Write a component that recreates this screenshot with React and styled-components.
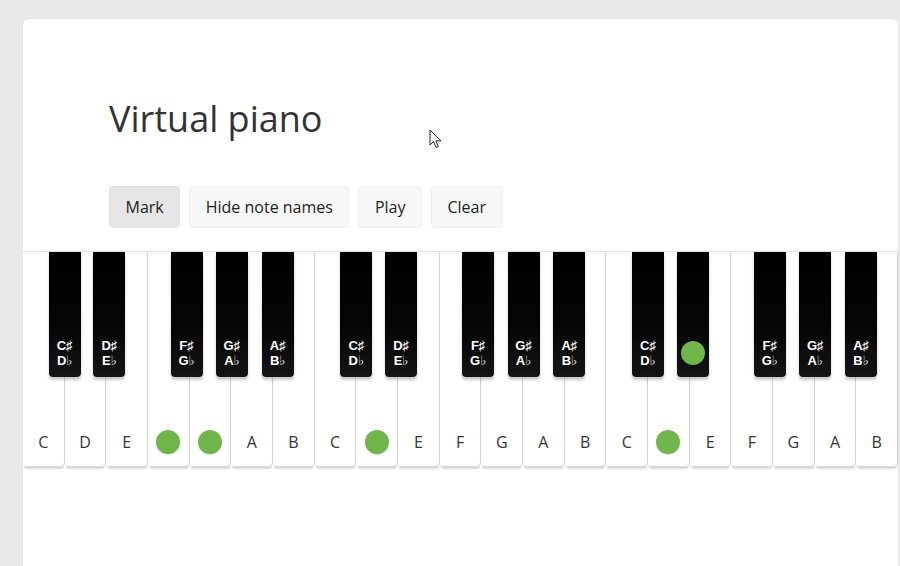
import React from 'react';
import styled, { createGlobalStyle } from 'styled-components';

const GlobalStyle = createGlobalStyle`
  html, body {
    margin: 0;
    padding: 0;
    background: #e9e9e9;
    font-family: "Open Sans", "DejaVu Sans", sans-serif;
    color: #333;
    overflow: hidden;
  }
`;

const Card = styled.main`
  margin: 19px 0 0 23px;
  width: 875px;
  min-height: 560px;
  background: #fff;
  border-radius: 6px 6px 0 0;
  box-shadow: 0 -1px 2px rgba(0, 0, 0, 0.04);
  padding-top: 78px;
  box-sizing: border-box;
`;

const Header = styled.header`
  padding-left: 86px;
`;

const Title = styled.h1`
  margin: 0;
  font-size: 36px;
  line-height: 43px;
  font-weight: 400;
  color: #333;
`;

const Toolbar = styled.div`
  display: flex;
  gap: 9px;
  margin-top: 46px;
`;

const Button = styled.button`
  font-family: inherit;
  font-size: 16px;
  line-height: 22px;
  color: #222;
  padding: 9px 15.5px;
  border-radius: 4px;
  border: 1px solid ${p => (p.$active ? '#e2e2e2' : '#f0f0f0')};
  background: ${p => (p.$active ? '#e6e6e6' : '#f7f7f7')};
  cursor: pointer;
`;

const Keyboard = styled.div`
  position: relative;
  display: flex;
  margin-top: 23px;
  border-top: 1px solid #e3e3e3;
`;

const WhiteKey = styled.div`
  flex: 1;
  height: 214px;
  background: #fff;
  border-right: 1px solid #d4d4d4;
  border-radius: 0 0 4px 4px;
  box-shadow: 0 4px 2px -1px #d8d8d8;
  display: flex;
  flex-direction: column;
  justify-content: flex-end;
  align-items: center;
  padding-bottom: 12px;
  box-sizing: border-box;
`;

const Slot = styled.div`
  height: ${p => p.$h}px;
  display: flex;
  flex-direction: column;
  align-items: center;
  justify-content: center;
`;

const WhiteName = styled.span`
  font-size: 16px;
  line-height: 22px;
  color: #333;
`;

const BlackKey = styled.div`
  position: absolute;
  top: 0;
  width: 3.66%;
  height: 125px;
  background: linear-gradient(#000 0%, #050505 60%, #151515 100%);
  border-radius: 0 0 4px 4px;
  box-shadow: 0 3px 3px rgba(0, 0, 0, 0.22);
  display: flex;
  flex-direction: column;
  justify-content: flex-end;
  align-items: center;
  padding-bottom: 9px;
  box-sizing: border-box;
`;

const BlackName = styled.span`
  display: block;
  font-family: "Liberation Sans", "DejaVu Sans", sans-serif;
  font-size: 13px;
  line-height: 15px;
  font-weight: 700;
  color: #fff;
  text-align: center;
  white-space: nowrap;
`;

const Dot = styled.span`
  width: 24px;
  height: 24px;
  border-radius: 50%;
  background: radial-gradient(circle at 50% 45%, #70b64d 60%, #62a643 100%);
  box-shadow: 0 1px 1px rgba(0, 0, 0, 0.15);
`;

const Cursor = styled.svg`
  position: fixed;
  left: 429px;
  top: 129px;
  pointer-events: none;
`;

const WHITE = ['C', 'D', 'E', 'F', 'G', 'A', 'B'];
const BLACK = [
  { off: 0.616, top: 'C♯', bottom: 'D♭' },
  { off: 1.69, top: 'D♯', bottom: 'E♭' },
  { off: 3.54, top: 'F♯', bottom: 'G♭' },
  { off: 4.63, top: 'G♯', bottom: 'A♭' },
  { off: 5.73, top: 'A♯', bottom: 'B♭' },
];

const markedWhite = new Set(['0-F', '0-G', '1-D', '2-D']);
const markedBlack = new Set(['2-1']);

export default function App() {
  const octaves = [0, 1, 2];
  return (
    <>
      <GlobalStyle />
      <Card>
        <Header>
          <Title>Virtual piano</Title>
          <Toolbar>
            <Button $active>Mark</Button>
            <Button>Hide note names</Button>
            <Button>Play</Button>
            <Button>Clear</Button>
          </Toolbar>
        </Header>
        <Keyboard>
          {octaves.map(o =>
            WHITE.map(n => (
              <WhiteKey key={`${o}-${n}`}>
                <Slot $h={24}>
                  {markedWhite.has(`${o}-${n}`) ? <Dot /> : <WhiteName>{n}</WhiteName>}
                </Slot>
              </WhiteKey>
            ))
          )}
          {octaves.map(o =>
            BLACK.map((b, i) => (
              <BlackKey key={`${o}-b${i}`} style={{ left: `${((o * 7 + b.off) / 21) * 100}%` }}>
                <Slot $h={30}>
                  {markedBlack.has(`${o}-${i}`) ? (
                    <Dot />
                  ) : (
                    <>
                      <BlackName>{b.top}</BlackName>
                      <BlackName>{b.bottom}</BlackName>
                    </>
                  )}
                </Slot>
              </BlackKey>
            ))
          )}
        </Keyboard>
      </Card>
      <Cursor width="14" height="20" viewBox="0 0 14 20">
        <path d="M1 1 L1 16 L4.5 12.6 L7 18.5 L9.3 17.5 L6.9 11.8 L12 11.8 Z" fill="#fff" stroke="#222" strokeWidth="1" strokeLinejoin="round" />
      </Cursor>
    </>
  );
}
